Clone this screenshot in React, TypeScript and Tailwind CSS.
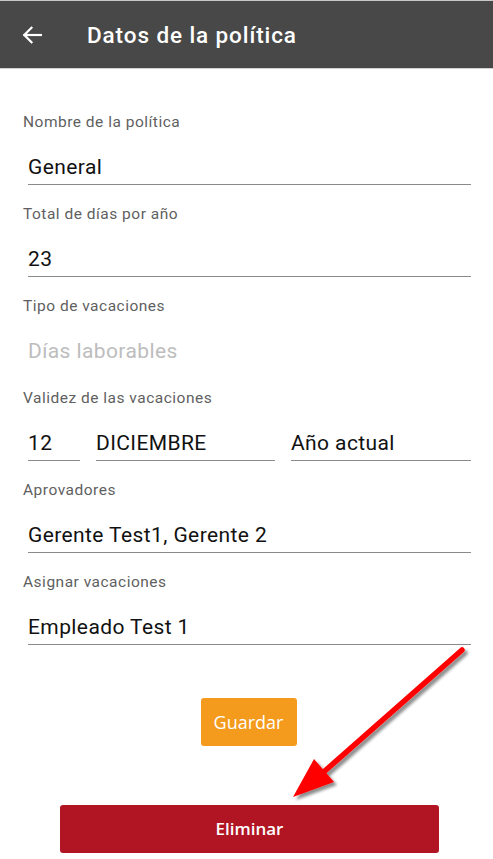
import React from "react";

const roboto = { fontFamily: "Roboto, 'Noto Sans', sans-serif" };

function Field({ label, children }: { label: string; children: React.ReactNode }) {
  return (
    <div className="flex flex-col">
      <div className="h-[20px] text-[15.5px] leading-[20px] tracking-[0.5px] text-[#5f5f5f]">{label}</div>
      <div className="mt-[21px] flex gap-[16px] pl-[5px]">{children}</div>
    </div>
  );
}

function Value({ text, className = "", placeholder = false, underline = true }: { text: string; className?: string; placeholder?: boolean; underline?: boolean }) {
  return (
    <div
      className={`h-[32px] text-[21px] leading-[28px] tracking-[0.4px] ${placeholder ? "text-[#bdbdbd]" : "text-[#111]"} ${underline ? "border-b border-[#8a8a8a]" : ""} ${className}`}
    >
      {text}
    </div>
  );
}

export default function App() {
  return (
    <div className="relative w-[493px] h-[859px] bg-white overflow-hidden" style={roboto}>
      <div className="h-[69px] bg-[#484848] border-t border-[#c8c8c8] border-b border-b-[#d0d0d0] flex items-center">
        <div className="w-[87px] pl-[22px] flex items-center">
          <svg width="20" height="18" viewBox="0 0 20 18" fill="none" stroke="white" strokeWidth="2.2" strokeLinecap="square">
            <path d="M19 9H2.5" />
            <path d="M9.5 1.8L2.3 9l7.2 7.2" />
          </svg>
        </div>
        <div className="text-white text-[22.5px] tracking-[0.9px] font-medium leading-[28px] mt-[1px]">Datos de la política</div>
      </div>

      <div className="pl-[23px] pr-[22px] pt-[43px] flex flex-col gap-[19px]">
        <Field label="Nombre de la política">
          <Value text="General" className="flex-1" />
        </Field>
        <Field label="Total de días por año">
          <Value text="23" className="flex-1" />
        </Field>
        <Field label="Tipo de vacaciones">
          <Value text="Días laborables" className="flex-1" placeholder underline={false} />
        </Field>
        <Field label="Validez de las vacaciones">
          <Value text="12" className="w-[52px]" />
          <Value text="DICIEMBRE" className="w-[179px]" />
          <Value text="Año actual" className="flex-1" />
        </Field>
        <Field label="Aprovadores">
          <Value text="Gerente Test1, Gerente 2" className="flex-1" />
        </Field>
        <Field label="Asignar vacaciones">
          <Value text="Empleado Test 1" className="flex-1" />
        </Field>
      </div>

      <div className="flex justify-center pt-[53px] pl-[4px]" style={{ fontFamily: "'Open Sans', sans-serif" }}>
        <div className="w-[96px] h-[48px] rounded-[3px] bg-[#f49a1c] text-white text-[18px] flex items-center justify-center">Guardar</div>
      </div>
      <div className="flex justify-start pl-[60px] pt-[59px]" style={{ fontFamily: "'Open Sans', sans-serif" }}>
        <div className="w-[379px] h-[48px] rounded-[3px] bg-[#b11422] text-white text-[17px] font-semibold flex items-center justify-center">Eliminar</div>
      </div>

      <svg className="absolute left-0 top-0 pointer-events-none" width="493" height="859" viewBox="0 0 493 859">
        <defs>
          <filter id="sh" x="-20%" y="-20%" width="140%" height="140%">
            <feGaussianBlur in="SourceAlpha" stdDeviation="1.5" />
            <feOffset dx="3" dy="3" result="b" />
            <feComponentTransfer><feFuncA type="linear" slope="0.45" /></feComponentTransfer>
            <feMerge><feMergeNode /><feMergeNode in="SourceGraphic" /></feMerge>
          </filter>
        </defs>
        <g filter="url(#sh)">
          <line x1="462" y1="650" x2="318" y2="777" stroke="#ff0000" strokeWidth="5.5" strokeLinecap="round" />
          <polygon points="293,797 314,759 334,782" fill="#ff0000" />
        </g>
      </svg>
    </div>
  );
}
